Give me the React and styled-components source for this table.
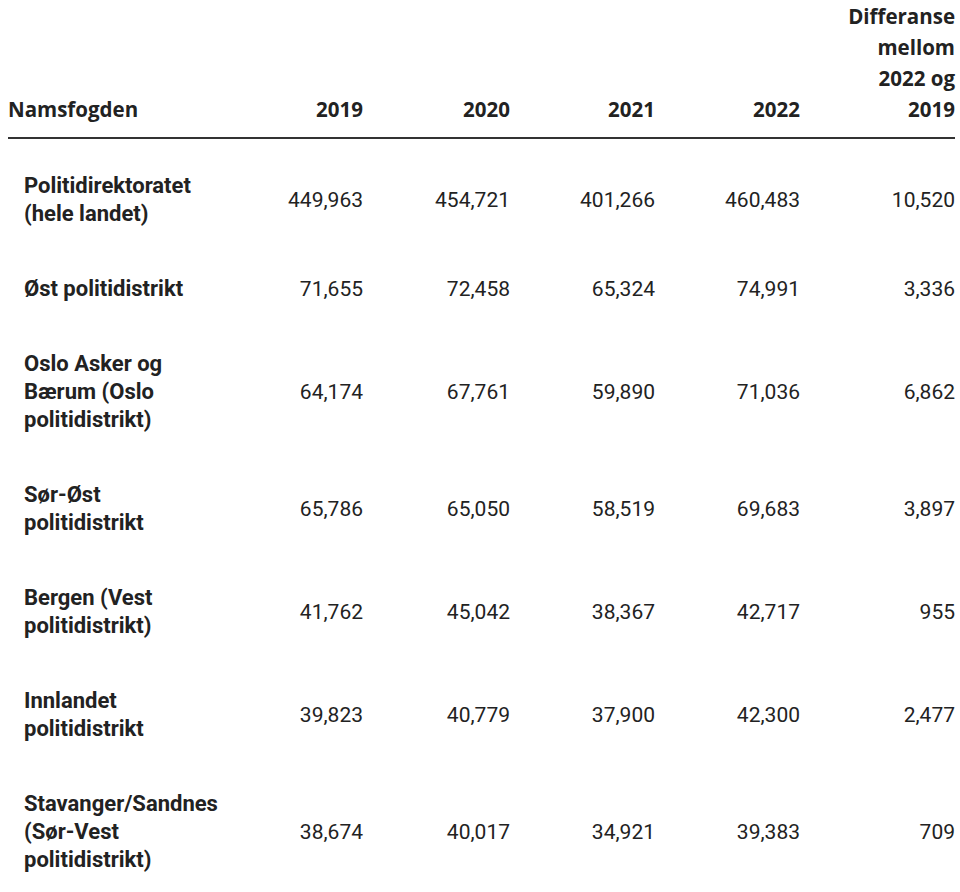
import styled, { createGlobalStyle } from 'styled-components';

const GlobalStyle = createGlobalStyle`
  html, body {
    margin: 0;
    padding: 0;
    background: #ffffff;
  }
`;

const rows = [
    { name: 'Politidirektoratet (hele landet)', values: ['449,963', '454,721', '401,266', '460,483', '10,520'] },
    { name: 'Øst politidistrikt', values: ['71,655', '72,458', '65,324', '74,991', '3,336'] },
    { name: 'Oslo Asker og Bærum (Oslo politidistrikt)', values: ['64,174', '67,761', '59,890', '71,036', '6,862'] },
    { name: 'Sør-Øst politidistrikt', values: ['65,786', '65,050', '58,519', '69,683', '3,897'] },
    { name: 'Bergen (Vest politidistrikt)', values: ['41,762', '45,042', '38,367', '42,717', '955'] },
    { name: 'Innlandet politidistrikt', values: ['39,823', '40,779', '37,900', '42,300', '2,477'] },
    { name: 'Stavanger/Sandnes (Sør-Vest politidistrikt)', values: ['38,674', '40,017', '34,921', '39,383', '709'] },
];

const columns = [
    { label: '2019', width: 149 },
    { label: '2020', width: 147 },
    { label: '2021', width: 145 },
    { label: '2022', width: 145 },
    { label: 'Differanse mellom 2022 og 2019', width: 155 },
];

const Page = styled.div`
  padding: 0 5px 0 8px;
  height: 892px;
  overflow: hidden;
`;

const Table = styled.table`
  width: 947px;
  table-layout: fixed;
  border-collapse: collapse;
  color: #222222;
`;

const HeadCell = styled.th`
  font-family: "Open Sans", "Liberation Sans", sans-serif;
  font-weight: 700;
  font-size: 20.5px;
  line-height: 31px;
  text-align: ${props => (props.$left ? 'left' : 'right')};
  vertical-align: bottom;
  padding: 1px 0 12px ${props => (props.$left ? '0' : '40px')};
  border-bottom: 2px solid #333333;
`;

const Row = styled.tr`
  &:first-child td {
    padding-top: 33px;
  }
`;

const NameCell = styled.td`
  font-family: Roboto, "Liberation Sans", sans-serif;
  font-weight: 700;
  font-size: 22px;
  line-height: 28px;
  padding: 23px 0 24px 16px;
  vertical-align: middle;
  text-align: left;
`;

const NumberCell = styled.td`
  font-family: Roboto, "Liberation Sans", sans-serif;
  font-weight: 400;
  font-size: 21px;
  line-height: 28px;
  padding: 23px 0 24px 40px;
  vertical-align: middle;
  text-align: right;
`;

const App = () => {
    return (
        <Page>
            <GlobalStyle />
            <Table>
                <colgroup>
                    <col style={{ width: 206 }} />
                    {columns.map(c => (
                        <col key={c.label} style={{ width: c.width }} />
                    ))}
                </colgroup>
                <thead>
                    <tr>
                        <HeadCell $left>Namsfogden</HeadCell>
                        {columns.map(c => (
                            <HeadCell key={c.label}>{c.label}</HeadCell>
                        ))}
                    </tr>
                </thead>
                <tbody>
                    {rows.map(r => (
                        <Row key={r.name}>
                            <NameCell>{r.name}</NameCell>
                            {r.values.map((v, i) => (
                                <NumberCell key={i}>{v}</NumberCell>
                            ))}
                        </Row>
                    ))}
                </tbody>
            </Table>
        </Page>
    );
};

export default App;
